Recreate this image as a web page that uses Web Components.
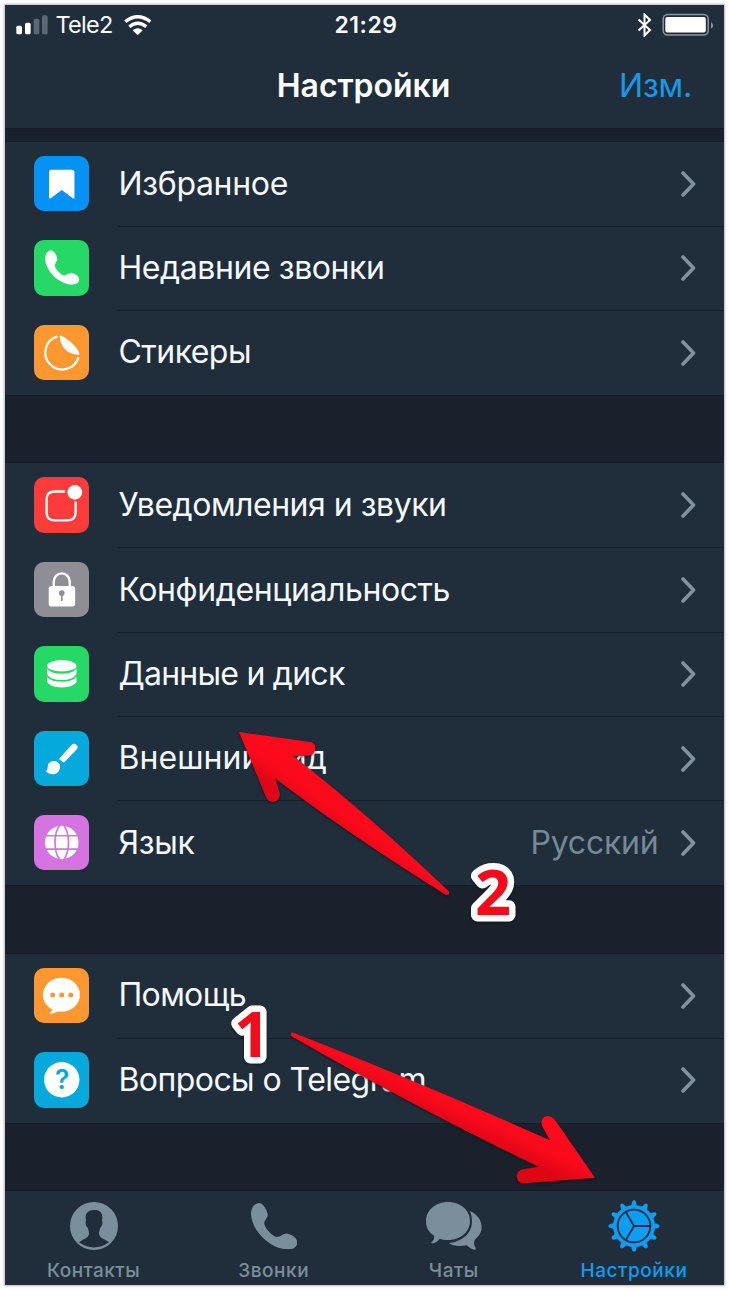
<!DOCTYPE html>
<html lang="ru">
<head>
<meta charset="utf-8">
<title>Настройки</title>
<style>
html,body{margin:0;height:100%}
body{background:#fdfdfd;font-family:Inter,"Noto Sans",sans-serif;overflow:hidden}
</style>
</head>
<body>
<settings-screen></settings-screen>
<script>
const define=(name,html,after)=>customElements.define(name,class extends HTMLElement{
  constructor(){super();this.attachShadow({mode:'open'});}
  connectedCallback(){
    this.shadowRoot.innerHTML=typeof html==='function'?html(this):html;
    if(after)after(this);
  }
});

const PHONE='M25 0C11 0 0 14 0 34C3 86 60 140 112 139C129 139 139 130 139 118C138 104 124 96 110 92C98 89 88 103 76 102C62 98 44 78 40 64C38 52 52 44 50 34C47 18 35 0 25 0Z';
const teeth=Array.from({length:12},(_,i)=>`<path d="M-10 -56L-5.5 -73Q0 -81 5.5 -73L10 -56Z" transform="rotate(${i*30})"/>`).join('');
const ICONS={
  bookmark:['#0592f5','<path d="M53 41H113Q121 41 121 49V124Q121 129 116 126L83 102L50 126Q45 129 45 124V49Q45 41 53 41Z"/>'],
  phone:['#26d967',`<path transform="translate(33 31) scale(.735)" d="${PHONE}"/>`],
  sticker:['#fd9730','<path d="M70 34A50.5 50.5 0 1 0 133 96" fill="none" stroke="#fff" stroke-width="6.5"/><path d="M77 34Q77 30 82 32C104 42 128 64 136 85Q137 89 132 89C102 88 78 68 77 34Z"/>'],
  alert:['#fd3b3b','<path d="M93 43.5H62Q37.500 43.500 37.500 67V106Q37.500 129.500 62 129.500H100Q124.500 129.500 124.500 106V73" fill="none" stroke="#fff" stroke-width="7"/><circle cx="122" cy="46" r="22"/>'],
  lock:['#8f8e95','<rect x="44" y="72" width="79" height="61" rx="8"/><path d="M59 75V60a24 26 0 0 1 48 0V75" fill="none" stroke="#fff" stroke-width="7"/><circle cx="83" cy="93" r="8.500" fill="#8f8e95"/><path d="M83 95V117" stroke="#8f8e95" stroke-width="5"/>'],
  disk:['#26d967','<ellipse cx="83" cy="59" rx="44" ry="17"/><path d="M39 67Q50 83 83 83Q116 83 127 67V84Q118 102 83 102Q48 102 39 84Z"/><path d="M39 92Q50 107 83 107Q116 107 127 92V108Q118 124 83 124Q48 124 39 108Z"/>'],
  brush:['#06a9dc','<path d="M76 82L112 42Q119 35 127 41Q134 48 127 56L91 93Q88 95 84 91L77 86Q74 84 76 82Z"/><path d="M35 120C44 119 38 104 45 96C53 87 67 88 73 95C80 102 79 116 71 124C61 133 43 130 35 120Z"/>'],
  globe:['#d573e3','<circle cx="83" cy="82" r="50"/><g fill="none" stroke="#d573e3" stroke-width="5"><path d="M77 30C58 57 58 107 77 134M89 30C108 57 108 107 89 134M30 62H136M30 102H136"/></g>'],
  help:['#fd9730','<ellipse cx="82" cy="80" rx="55.500" ry="51"/><path d="M54 117Q57 129 44 137Q65 137 77 125Z"/><g fill="#fd9730"><circle cx="56" cy="81" r="7.500"/><circle cx="83" cy="81" r="7.500"/><circle cx="110" cy="81" r="7.500"/></g>'],
  faq:['#06a9dc','<circle cx="83" cy="83" r="53"/><text x="84" y="112" text-anchor="middle" font-family="Inter,sans-serif" font-size="79" font-weight="600" fill="#06a9dc">?</text>']
};
const TABS={
  contacts:[144,144,`<circle cx="72" cy="72" r="72"/><path fill="#202e3b" d="M72 24C88 23 98 32 97 48L96 57Q99 60 96 70Q93 76 91 77C89 84 87 88 87 94C87 108 102 110 117 121Q72 152 27 121C42 110 57 108 57 94C57 88 55 84 53 77Q50 76 48 70Q45 60 48 57L47 48C46 32 56 25 72 24Z"/>`],
  calls:[139,139,`<path d="${PHONE}"/>`],
  chats:[168,145,'<path d="M66 0C104 0 132 25 132 57S104 114 66 114C55 114 47 112 41 110C32 120 27 124 17 124Q13 123 18 119Q27 111 24 101C8 91 0 77 0 57C0 25 29 0 66 0Z"/><path d="M132 27C154 37 167 54 167 76C167 91 158 104 146 113Q141 124 149 138Q152 144 144 143C134 141 128 134 122 130C99 134 80 132 68 123C112 120 154 86 132 27Z"/>'],
  settings:[156,156,`<g transform="translate(78 78)"><circle r="63"/>${teeth}<g fill="none" stroke="#202e3b" stroke-width="5.500"><circle r="49"/><path d="M49 0H0L-24 -41M0 0L-24 41"/></g></g>`]
};

/* Text run whose tracking is adjusted so that it spans the given advance width. */
define('fit-text',`<style>:host{display:block;white-space:pre;line-height:1.2}span{display:inline-block}</style><span><slot></slot></span>`,el=>{
  const s=el.shadowRoot.querySelector('span'),w=+el.getAttribute('span');
  if(w){const d=(w-s.getBoundingClientRect().width)/el.textContent.length;s.style.letterSpacing=d+'px';}
});

define('status-bar',`<style>
:host{display:grid;grid-template-columns:1fr auto 1fr;align-items:center;height:40px;padding:0 10px 0 11px;color:#f6fafd}
.l,.r{display:flex;align-items:center}.r{justify-content:flex-end}
fit-text{font-size:23.500px}.l fit-text{margin-left:6.500px}
.t{font-weight:600;font-size:23px;padding:1px 0 0 2px}
svg{display:block}
</style>
<div class="l"><svg width="33" height="20" viewBox="0 0 99 60"><g fill="#fff"><rect x="1" y="32" width="17" height="26" rx="5"/><rect x="27" y="23" width="17" height="35" rx="5"/></g><g fill="#5b6874"><rect x="53" y="11" width="17" height="47" rx="5"/><rect x="78" y="1" width="17" height="57" rx="5"/></g></svg>
<fit-text span="57">Tele2</fit-text>
<svg style="margin-left:11px" width="28" height="20" viewBox="0 0 84 60"><g fill="none" stroke="#fff" stroke-width="10"><path d="M4 20Q41 -10 79 20"/><path d="M16 35Q41 14 67 35"/></g><path fill="#fff" d="M26 46Q41 34 56 46L44 58Q41 61 38 58Z"/></svg></div>
<fit-text class="t" span="63">21:29</fit-text>
<div class="r"><svg width="15" height="24" viewBox="0 0 15 24"><path d="M1.500 6.500L13 17L7.500 22.500V1.500L13 7L1.500 17.500" fill="none" stroke="#fff" stroke-width="2"/></svg>
<svg style="margin-left:10px" width="52" height="24" viewBox="0 0 52 24"><rect x="1.200" y="1.500" width="45" height="20.500" rx="4.500" fill="none" stroke="#8b95a0" stroke-width="1.500"/><rect x="3.300" y="4" width="40.500" height="15.500" rx="2" fill="#fff"/><path d="M49 9Q51.500 11 51 13Q51 14.500 49 15.500Z" fill="#8b95a0"/></svg></div>`);

define('nav-bar',`<style>
:host{display:grid;grid-template-columns:1fr auto 1fr;align-items:center;height:84px;padding:0 32px 0 30px;box-sizing:border-box;border-bottom:1px solid #141c27}
.t{grid-column:2;font-weight:600;font-size:32px;color:#fff}
.e{justify-self:end;font-size:32px;color:#129bec}
</style><fit-text class="t" span="173.500">Настройки</fit-text><fit-text class="e" span="73">Изм.</fit-text>`);

define('setting-row',el=>{
  const [bg,art]=ICONS[el.getAttribute('icon')];
  return `<style>
:host{display:flex;height:84.400px;padding-left:28.600px}
.i{width:55.500px;height:55.500px;border-radius:10px;background:${bg};margin:13.900px 28.900px 0 0;flex:none}
.i svg{display:block;width:100%;height:100%}
.b{flex:1;display:flex;align-items:center;border-bottom:1px solid var(--line,#15202b);padding:0 28px 0 0;margin-bottom:-.4px;font-size:32px;color:#f5f9fd}
.n{padding-left:.5px}
.v{margin-left:auto;color:#758996}
.c{margin-left:auto;flex:none}.v+.c{margin-left:22.500px}
</style><div class="i"><svg viewBox="0 0 166 166" fill="#fff">${art}</svg></div>
<div class="b"><fit-text class="n" span="${el.getAttribute('span')}">${el.getAttribute('label')}</fit-text>
${el.hasAttribute('value')?`<fit-text class="v" span="128">${el.getAttribute('value')}</fit-text>`:''}
<svg class="c" width="15" height="28" viewBox="0 0 15 28"><path d="M2 3L12.500 14L2 25" fill="none" stroke="#8092a0" stroke-width="3.600" stroke-linecap="round" stroke-linejoin="round"/></svg></div>`;
});

define('setting-group',`<style>
:host{display:block;background:#202e3b;border-top:1px solid #141c27;border-bottom:1px solid #141c27}
::slotted(:last-child){--line:transparent}
</style><slot></slot>`);

define('tab-item',el=>{
  const n=el.getAttribute('icon'),[w,h,art]=TABS[n];
  return `<style>
:host{flex:1;display:flex;flex-direction:column;align-items:center;color:${n==='settings'?'#0d9df5':'#7b8e9b'}}
div{height:71px;display:flex;align-items:center}
fit-text{font-size:19px;font-weight:500;margin-top:-1.400px}
</style><div><svg width="${w/3}" height="${h/3}" viewBox="0 0 ${w} ${h}" fill="currentColor">${art}</svg></div><fit-text span="${el.getAttribute('span')}">${el.getAttribute('label')}</fit-text>`;
});

define('tab-bar',`<style>:host{display:flex;background:#202e3b;border-top:1px solid #141c27;box-sizing:border-box}
::slotted(:first-child){margin-left:-1.500px}</style><slot></slot>`);

/* Hand-placed callouts drawn over the screen. */
define('callout-layer',`<style>
:host{position:absolute;inset:0;pointer-events:none}
svg{display:block;filter:drop-shadow(0 1px 1px rgba(0,0,0,.5))}
text{font:700 63px "Open Sans","Noto Sans",sans-serif;fill:#f30a1b;stroke:#fff;stroke-width:13px;stroke-linejoin:round;paint-order:stroke}
</style><svg width="729" height="1290" viewBox="0 0 729 1290">
<defs>
<linearGradient id="g1" gradientUnits="userSpaceOnUse" x1="460" y1="1094" x2="446" y2="1124"><stop offset="0" stop-color="#fd0a1c"/><stop offset=".45" stop-color="#fa0b1c"/><stop offset="1" stop-color="#de0515"/></linearGradient>
<linearGradient id="g2" gradientUnits="userSpaceOnUse" x1="343" y1="796" x2="324" y2="823"><stop offset="0" stop-color="#fd0a1c"/><stop offset=".45" stop-color="#fa0b1c"/><stop offset="1" stop-color="#e00616"/></linearGradient>
</defs>
<path fill="url(#g2)" d="M239 732L310 742C318 743 317 755 308 755.700L293.300 756Q370 816 449 891.500Q450 895.500 446 895Q345 832 275 778.300L279.800 793C281 803 269 805 266 797Z"/>
<path fill="url(#g1)" d="M293 1032.500Q422 1083 550 1140.300L542.500 1127C538 1117 549 1112 555 1120L595 1177.700L524 1183.300C514 1183 515 1170 523 1169.200L538.300 1166.700Q420 1110 291 1036Q290 1032 293 1032.500Z"/>
<text x="475" y="915">2</text><text x="234" y="1057">1</text>
</svg>`);

define('settings-screen',`<style>
:host{display:block;position:relative;width:729px;height:1290px;box-sizing:border-box;padding:5px}
main{display:flex;flex-direction:column;width:719px;height:1280px;background:#1a202c;box-shadow:0 0 2px 1px #b8b8b8}
header{background:#202e3b;height:124px}
setting-group{margin-bottom:66.300px}
header+setting-group{margin-top:12px}
tab-bar{flex:1;min-height:0}
</style><main>
<header><status-bar></status-bar><nav-bar></nav-bar></header>
<setting-group>
<setting-row icon="bookmark" label="Избранное" span="169.500"></setting-row>
<setting-row icon="phone" label="Недавние звонки" span="266"></setting-row>
<setting-row icon="sticker" label="Стикеры" span="132.500"></setting-row>
</setting-group>
<setting-group>
<setting-row icon="alert" label="Уведомления и звуки" span="328"></setting-row>
<setting-row icon="lock" label="Конфиденциальность" span="331.500"></setting-row>
<setting-row icon="disk" label="Данные и диск" span="226"></setting-row>
<setting-row icon="brush" label="Внешний вид" span="208.500"></setting-row>
<setting-row icon="globe" label="Язык" span="76" value="Русский"></setting-row>
</setting-group>
<setting-group>
<setting-row icon="help" label="Помощь" span="127.500"></setting-row>
<setting-row icon="faq" label="Вопросы о Telegram" span="307.500"></setting-row>
</setting-group>
<tab-bar>
<tab-item icon="contacts" label="Контакты" span="93"></tab-item>
<tab-item icon="calls" label="Звонки" span="71"></tab-item>
<tab-item icon="chats" label="Чаты" span="50"></tab-item>
<tab-item icon="settings" label="Настройки" span="107"></tab-item>
</tab-bar>
</main><callout-layer></callout-layer>`);
</script>
</body>
</html>
